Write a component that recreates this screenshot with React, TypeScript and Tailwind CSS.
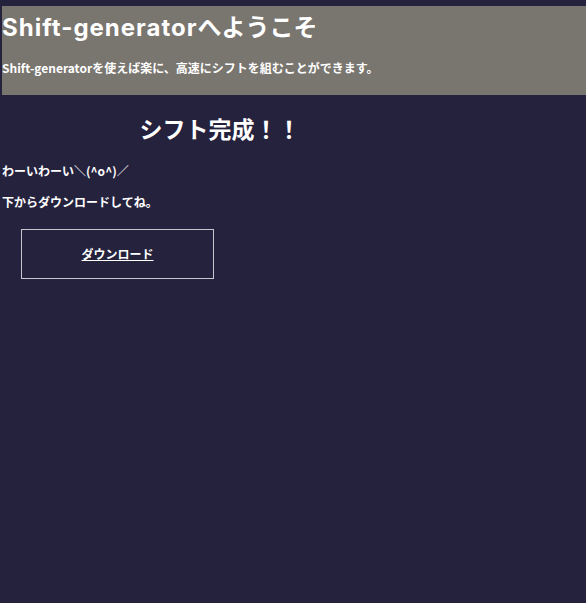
import React from 'react';

const font = { fontFamily: '"Noto Sans CJK JP", "Noto Sans", sans-serif' };
const titleFont = { fontFamily: 'Inter, "Noto Sans CJK JP", sans-serif' };

const App: React.FC = () => {
  return (
    <div className="min-h-[603px] bg-[#25223d] pt-[6px] pl-[2px] text-white" style={font}>
      <header className="bg-[#79756f] h-[89px]">
        <h1 className="text-[24px] font-bold leading-[36px] pt-[4px]" style={titleFont}>
          <span className="tracking-[1px]">Shift-generator</span>へようこそ
        </h1>
        <p className="text-[12px] font-bold leading-[18px] mt-[13px]">
          Shift-generatorを使えば楽に、高速にシフトを組むことができます。
        </p>
      </header>
      <main className="pt-[18px]">
        <h2 className="w-[436px] text-center text-[23px] font-bold leading-[30px]">シフト完成！！</h2>
        <p className="text-[12px] font-bold leading-[18px] mt-[19px]">わーいわーい＼(^o^)／</p>
        <p className="text-[12px] font-bold leading-[18px] mt-[13px]">下からダウンロードしてね。</p>
        <div className="pl-[19px] mt-[18px]">
          <a
            href="#"
            className="flex items-center justify-center w-[193px] h-[50px] border border-[#c8c6d0] text-[12px] font-bold underline"
          >
            ダウンロード
          </a>
        </div>
      </main>
    </div>
  );
};

export default App;
